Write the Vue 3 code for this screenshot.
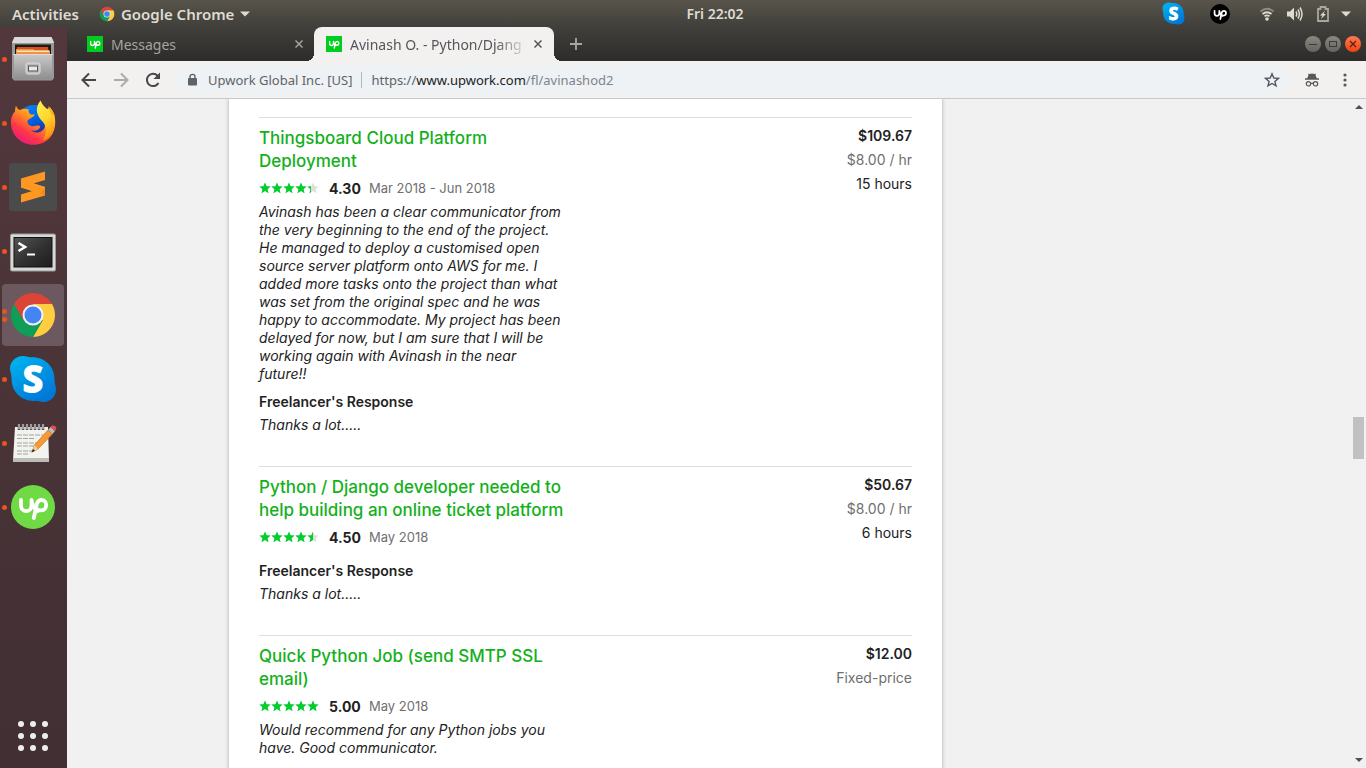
<script setup>
const dockItems = [
  { id: 'files', label: 'Files', dots: 1 },
  { id: 'firefox', label: 'Firefox', dots: 1 },
  { id: 'sublime', label: 'Sublime Text', dots: 1 },
  { id: 'terminal', label: 'Terminal', dots: 1 },
  { id: 'chrome', label: 'Google Chrome', dots: 2, active: true },
  { id: 'skype', label: 'Skype', dots: 1 },
  { id: 'notes', label: 'Text Editor', dots: 1 },
  { id: 'upwork', label: 'Upwork', dots: 1 },
]

const jobs = [
  {
    title: 'Thingsboard Cloud Platform\nDeployment',
    score: '4.30',
    fill: 86,
    dates: 'Mar 2018 - Jun 2018',
    feedback:
      'Avinash has been a clear communicator from\nthe very beginning to the end of the project.\nHe managed to deploy a customised open\nsource server platform onto AWS for me. I\nadded more tasks onto the project than what\nwas set from the original spec and he was\nhappy to accommodate. My project has been\ndelayed for now, but I am sure that I will be\nworking again with Avinash in the near\nfuture!!',
    response: 'Thanks a lot.....',
    total: '$109.67',
    rate: '$8.00 / hr',
    hours: '15 hours',
  },
  {
    title: 'Python / Django developer needed to\nhelp building an online ticket platform',
    score: '4.50',
    fill: 90,
    dates: 'May 2018',
    response: 'Thanks a lot.....',
    total: '$50.67',
    rate: '$8.00 / hr',
    hours: '6 hours',
  },
  {
    title: 'Quick Python Job (send SMTP SSL\nemail)',
    score: '5.00',
    fill: 100,
    dates: 'May 2018',
    feedback: 'Would recommend for any Python jobs you\nhave. Good communicator.',
    total: '$12.00',
    rate: 'Fixed-price',
  },
]

const starPath = 'M6 0.5L7.6 4.2L11.6 4.6L8.6 7.2L9.5 11.2L6 9.1L2.5 11.2L3.4 7.2L0.4 4.6L4.4 4.2Z'
</script>

<template>
  <div class="desktop">
    <svg width="0" height="0" class="defs" aria-hidden="true">
      <defs>
        <symbol id="chrome-mark" viewBox="0 0 48 48">
          <path d="M4.95 13A22 22 0 0 1 43.05 13L24 13L14.47 29.5Z" fill="#db4437" />
          <path d="M43.05 13A22 22 0 0 1 24 46L33.53 29.5L24 13Z" fill="#ffcd40" />
          <path d="M24 46A22 22 0 0 1 4.95 13L14.47 29.5L33.53 29.5Z" fill="#0f9d58" />
          <circle cx="24" cy="24" r="10.5" fill="#f1f1f1" />
          <circle cx="24" cy="24" r="8.5" fill="#4285f4" />
        </symbol>
        <symbol id="up-mark" viewBox="0 0 44 44">
          <g fill="none" stroke="#fff" stroke-width="3.8" stroke-linecap="round" stroke-linejoin="round">
            <path d="M10 15V20.5C10 28 20.5 28 20.5 20.5V15C21.5 20 24 24.5 27 26" />
            <path d="M22.8 33L25.4 20.5C26.2 16.5 28 15 30.4 15C33.4 15 35.2 17.4 35.2 20C35.2 23 33 25.4 30 25.4C28.5 25.4 27 25 25.5 23.8" />
          </g>
        </symbol>
        <symbol id="skype-mark" viewBox="0 0 48 48">
          <linearGradient id="skype-fill" x1="0" y1="0" x2="0.6" y2="1">
            <stop offset="0" stop-color="#00b7f0" />
            <stop offset="1" stop-color="#0078d7" />
          </linearGradient>
          <path
            d="M14 1C18 1 19 2.5 22 2.2C36 1.5 46 12 45.5 25C45.5 29 47 31 47 34.5C47 42 41 47 34.5 47C31 47 29 45.6 26 45.9C12 46.5 2 36 2.6 23C2.6 19 1 17 1 13.5C1 7 6.500 1 14 1Z"
            fill="url(#skype-fill)"
          />
          <text x="24" y="37" text-anchor="middle" font-size="36" font-weight="700" font-family="Open Sans, sans-serif" fill="#fff" stroke="#fff" stroke-width="2">S</text>
        </symbol>
        <linearGradient id="cab" x1="0" y1="0" x2="0" y2="1">
          <stop offset="0" stop-color="#c9c9c9" />
          <stop offset="1" stop-color="#8e8e8e" />
        </linearGradient>
        <linearGradient id="ff-body" x1="0.9" y1="0" x2="0.2" y2="1">
          <stop offset="0" stop-color="#fff04a" />
          <stop offset="0.4" stop-color="#ff9a1e" />
          <stop offset="0.72" stop-color="#ff3647" />
          <stop offset="1" stop-color="#e31587" />
        </linearGradient>
        <linearGradient id="ff-tail" x1="0" y1="0" x2="0.4" y2="1">
          <stop offset="0" stop-color="#fff44f" />
          <stop offset="0.6" stop-color="#ffd52c" />
          <stop offset="1" stop-color="#ff980e" />
        </linearGradient>
        <linearGradient id="ff-globe" x1="0.2" y1="0" x2="0.6" y2="1">
          <stop offset="0" stop-color="#0a84ff" />
          <stop offset="0.5" stop-color="#0060df" />
          <stop offset="1" stop-color="#3a1b8c" />
        </linearGradient>
        <linearGradient id="term" x1="0" y1="0" x2="1" y2="1">
          <stop offset="0" stop-color="#555" />
          <stop offset="0.5" stop-color="#333" />
          <stop offset="1" stop-color="#1c1c1c" />
        </linearGradient>
      </defs>
    </svg>

    <header class="topbar">
      <div class="topbar-left">
        <button class="top-btn" type="button">Activities</button>
        <button class="top-btn app-btn" type="button">
          <svg width="16" height="16"><use href="#chrome-mark" /></svg>
          <span>Google Chrome</span>
          <svg width="10" height="6" viewBox="0 0 10 6"><path d="M0 0.500H10L5 5.500Z" fill="#dfdbd2" /></svg>
        </button>
      </div>
      <time class="clock">Fri 22:02</time>
      <div class="tray">
        <svg width="23" height="23"><use href="#skype-mark" /></svg>
        <svg class="tray-up" width="20" height="20" viewBox="0 0 44 44"><circle cx="22" cy="22" r="22" fill="#000" /><use href="#up-mark" /></svg>
        <svg class="tray-wifi" width="14" height="14" viewBox="0 0 14 14" fill="none" stroke-width="1.8">
          <path d="M0.500 4.500Q7 -1 13.500 4.500" stroke="#8d8a83" />
          <path d="M2.500 7Q7 3.500 11.500 7" stroke="#dfdbd2" />
          <path d="M4.500 9.300Q7 7.600 9.500 9.300" stroke="#dfdbd2" />
          <circle cx="7" cy="12" r="1.800" fill="#dfdbd2" />
        </svg>
        <svg class="tray-sound" width="16" height="14" viewBox="0 0 16 14">
          <path d="M0 4.500H3L7 0.500V13.500L3 9.500H0Z" fill="#dfdbd2" />
          <path d="M9 4.500Q10.500 7 9 9.500M11 2.500Q13.800 7 11 11.500M13 0.500Q17 7 13 13.500" fill="none" stroke="#dfdbd2" stroke-width="1.500" />
        </svg>
        <svg class="tray-battery" width="12" height="16" viewBox="0 0 12 16">
          <path d="M1 3H3.500V1H8.500V3H11V15H1Z" fill="none" stroke="#aaa79f" stroke-width="1.800" />
          <path d="M8 4.500L3 9.500H5.500L4 13L9 8H6.500Z" fill="#dfdbd2" />
        </svg>
        <svg class="tray-arrow" width="10" height="6" viewBox="0 0 10 6"><path d="M0 0.500H10L5 5.500Z" fill="#dfdbd2" /></svg>
      </div>
    </header>

    <nav class="dock" aria-label="Dock">
      <button v-for="item in dockItems" :key="item.id" type="button" class="dock-item" :class="{ active: item.active }" :aria-label="item.label">
        <span class="dots"><i v-for="n in item.dots" :key="n"></i></span>
        <svg v-if="item.id === 'files'" width="48" height="48" viewBox="0 0 48 48">
          <path d="M5.500 2H42.500L45 7V43L43 45.500H5L3 43V7Z" fill="#999" />
          <path d="M5.500 2H42.500L45 8H3Z" fill="#dadada" />
          <rect x="6" y="9.500" width="36" height="12" fill="#1e1a18" />
          <path d="M8 12H39L40 20H7Z" fill="#d4521c" />
          <path d="M7 14H24L26 15.500H41V22H7Z" fill="#f0923c" />
          <rect x="8" y="15.500" width="32" height="1.500" fill="#fbe3c4" />
          <path d="M5 19.500H43V44.500H5Z" fill="url(#cab)" />
          <path d="M4 19.500H44" stroke="#d9d9d9" />
          <rect x="17" y="28" width="14" height="11" rx="2" fill="#bdbdbd" stroke="#dedede" />
          <rect x="19.500" y="31" width="9" height="5" fill="#e8e8e8" stroke="#555" />
        </svg>
        <svg v-else-if="item.id === 'firefox'" width="48" height="48" viewBox="0 0 48 48">
          <circle cx="25" cy="23" r="17" fill="url(#ff-globe)" />
          <path
            d="M7 6.500C8 9 9 10.500 11 11C14 9 17 9.500 20 10.500C19 12.500 20 14.500 22 15.500H26C24.500 18.500 21 19 18.500 21.500C18 25 21 28 25 27C28 26 32 26 31 28.500C29 32 25 32.500 22 31C27 36 35 33 36 27C37 22 35 17 32 13L41 8.500C48 16 48 30 41 38.500C32 49 14 48 6 36.500C0 28 1 17 6 12.500C6 10.500 6.400 8 7 6.500Z"
            fill="url(#ff-body)"
          />
          <path d="M31.500 1.500C33 5 35 7.500 38 10C44 15 46 22 45 29C43 36 39 40 34 41C38 34 38 28 34 23C28 17 25 10 31.500 1.500Z" fill="url(#ff-tail)" />
          <path d="M39 7C42 9 45 13 46 18L42 15Z" fill="#ffb01e" />
        </svg>
        <svg v-else-if="item.id === 'sublime'" width="48" height="48" viewBox="0 0 48 48">
          <rect width="48" height="48" rx="3" fill="#4b4b4b" />
          <path d="M12 15.500L36 8.500V17L24 20.600L36 24V32.500L12 39.500V31.500L24 27.700L12 24.500Z" fill="#ff9822" />
          <path d="M12 16V24.500L36 32.500V24Z" fill="#ff9822" />
          <path d="M24 27.700L31 30.500L36 25V32.500Z" fill="#ef8a18" />
        </svg>
        <svg v-else-if="item.id === 'terminal'" width="48" height="48" viewBox="0 0 48 48">
          <rect x="1.500" y="7" width="45" height="37" rx="1.500" fill="#d7d7d5" stroke="#9c9c9a" />
          <rect x="5" y="10.500" width="38" height="29.500" fill="url(#term)" stroke="#111" />
          <path d="M9.500 16L16 20L9.500 24" fill="none" stroke="#fff" stroke-width="2.600" />
          <path d="M18 27.500H26" stroke="#fff" stroke-width="2" />
        </svg>
        <svg v-else-if="item.id === 'chrome'" width="48" height="48"><use href="#chrome-mark" /></svg>
        <svg v-else-if="item.id === 'skype'" width="48" height="48"><use href="#skype-mark" /></svg>
        <svg v-else-if="item.id === 'notes'" width="48" height="48" viewBox="0 0 48 48">
          <path d="M6 8H39L40 41.500H4Z" fill="#f2f2ef" />
          <path d="M4 39H40V43H4Z" fill="#bcbcb8" />
          <path d="M8 16H34M8 19.500H26M8 24H32M8 27H28M8 32H23M8 35H19" stroke="#a3a3a3" stroke-dasharray="5 1" />
          <path d="M10 5V11M14 5V11M18 5V11M22 5V11M26 5V11M30 5V11M34 5V11" stroke="#555" stroke-width="2.600" />
          <path d="M10 5V10M14 5V10M18 5V10M22 5V10M26 5V10M30 5V10M34 5V10" stroke="#e6e6e6" stroke-width="1" />
          <path d="M23 33L25.500 26L39 11L43.500 15L29 30Z" fill="#f79a32" stroke="#b5671b" stroke-width="0.600" />
          <path d="M23 33L25.500 26L29 30Z" fill="#edcda0" />
          <path d="M22.500 33.500L24 30L26 31.800Z" fill="#222" />
          <path d="M39 11L41.500 8L46 12L43.500 15Z" fill="#b9bdc0" />
          <path d="M41.500 8C44 4.500 50 8 46 12Z" fill="#e2504f" />
        </svg>
        <svg v-else width="44" height="44" viewBox="0 0 44 44"><circle cx="22" cy="22" r="22" fill="#6fda44" /><use href="#up-mark" /></svg>
      </button>
      <button type="button" class="apps" aria-label="Show Applications">
        <i v-for="n in 9" :key="n"></i>
      </button>
    </nav>

    <main class="browser">
      <div class="tabstrip">
        <div class="tab">
          <svg class="favicon" width="16" height="16" viewBox="0 0 44 44"><rect width="44" height="44" fill="#00ce1e" /><use href="#up-mark" /></svg>
          <span class="tab-title">Messages</span>
          <button type="button" class="close" aria-label="Close Messages">
            <svg width="8" height="8" viewBox="0 0 8 8"><path d="M0.500 0.500L7.500 7.500M7.500 0.500L0.500 7.500" stroke="currentColor" stroke-width="1.500" /></svg>
          </button>
        </div>
        <div class="tab current">
          <svg class="favicon" width="16" height="16" viewBox="0 0 44 44"><rect width="44" height="44" fill="#00ce1e" /><use href="#up-mark" /></svg>
          <span class="tab-title fade">Avinash O. - Python/Djang</span>
          <button type="button" class="close" aria-label="Close Avinash O.">
            <svg width="8" height="8" viewBox="0 0 8 8"><path d="M0.500 0.500L7.500 7.500M7.500 0.500L0.500 7.500" stroke="currentColor" stroke-width="1.500" /></svg>
          </button>
        </div>
        <button type="button" class="new-tab" aria-label="New tab">
          <svg width="12" height="12" viewBox="0 0 12 12"><path d="M6 0V12M0 6H12" stroke="#a9a8a6" stroke-width="1.800" /></svg>
        </button>
        <div class="window-controls">
          <button type="button" aria-label="Minimize"><svg width="16" height="16" viewBox="0 0 16 16"><path d="M4 8.500H12" stroke="#3c3b37" /></svg></button>
          <button type="button" aria-label="Maximize"><svg width="16" height="16" viewBox="0 0 16 16"><rect x="4.500" y="5.500" width="7" height="5" fill="none" stroke="#3c3b37" /></svg></button>
          <button type="button" class="win-close" aria-label="Close window"><svg width="16" height="16" viewBox="0 0 16 16"><path d="M5 5L11 11M11 5L5 11" stroke="#5c2010" stroke-width="1.300" /></svg></button>
        </div>
      </div>

      <div class="toolbar">
        <button type="button" class="nav-btn" aria-label="Back">
          <svg width="16" height="16" viewBox="0 0 16 16" fill="none" stroke="#46474a" stroke-width="2"><path d="M15 8H2M8 1.500L1.500 8L8 14.500" /></svg>
        </button>
        <button type="button" class="nav-btn" aria-label="Forward">
          <svg width="16" height="16" viewBox="0 0 16 16" fill="none" stroke="#ababab" stroke-width="2"><path d="M1 8H14M8 1.500L14.500 8L8 14.500" /></svg>
        </button>
        <button type="button" class="nav-btn" aria-label="Reload">
          <svg width="16" height="16" viewBox="0 0 16 16"><path d="M13.500 11A6.200 6.200 0 1 1 12.600 3.600L14 5" fill="none" stroke="#46474a" stroke-width="2" /><path d="M15 0.500V7H8.500Z" fill="#46474a" /></svg>
        </button>
        <div class="omnibox">
          <svg width="10" height="14" viewBox="0 0 10 14"><rect x="1" y="5" width="9" height="7.500" rx="1" fill="#5f6368" /><path d="M3 6V3.600Q3 1.400 5.500 1.400T8 3.600V6" fill="none" stroke="#5f6368" stroke-width="1.400" /></svg>
          <span class="owner">Upwork Global Inc. [US]</span>
          <a class="url" href="#">https://<b>www.upwork.com</b><span>/fl/avinashod2</span></a>
          <button type="button" class="star-btn" aria-label="Bookmark">
            <svg width="16" height="16" viewBox="0 0 16 16"><path d="M8 1.800L9.800 6L14.400 6.400L10.900 9.400L12 13.900L8 11.500L4 13.900L5.100 9.400L1.600 6.400L6.200 6Z" fill="none" stroke="#54575c" stroke-width="1.400" /></svg>
          </button>
        </div>
        <svg class="incognito" width="14" height="14" viewBox="0 0 14 14" role="img" aria-label="Incognito">
          <path d="M3.500 0.500L5 1L7 0.600L9 1L10.500 0.500L11 4H3Z" fill="#54575c" />
          <path d="M0 6H14M2.500 4.700H11.500" stroke="#54575c" stroke-width="1.300" />
          <g fill="none" stroke="#54575c" stroke-width="1.200"><circle cx="3.500" cy="10.800" r="2.200" /><circle cx="10.500" cy="10.800" r="2.200" /><path d="M5.700 10.500Q7 9.600 8.300 10.500" /></g>
        </svg>
        <button type="button" class="menu-btn" aria-label="Menu">
          <svg width="4" height="14" viewBox="0 0 4 14" fill="#54575c"><circle cx="2" cy="2" r="1.600" /><circle cx="2" cy="7" r="1.600" /><circle cx="2" cy="12" r="1.600" /></svg>
        </button>
      </div>

      <div class="viewport">
        <div class="page">
          <section class="card">
            <article v-for="job in jobs" :key="job.title" class="job">
              <div class="job-main">
                <h2><a href="#">{{ job.title }}</a></h2>
                <div class="rating">
                  <span class="stars" role="img" :aria-label="job.score + ' out of 5'">
                    <svg width="60" height="12" viewBox="0 0 60 12"><path v-for="n in 5" :key="n" :d="starPath" :transform="`translate(${(n - 1) * 12} 0)`" fill="#dedede" /></svg>
                    <span class="stars-fill" :style="{ width: job.fill + '%' }">
                      <svg width="60" height="12" viewBox="0 0 60 12"><path v-for="n in 5" :key="n" :d="starPath" :transform="`translate(${(n - 1) * 12} 0)`" fill="#00ce2c" /></svg>
                    </span>
                  </span>
                  <strong>{{ job.score }}</strong>
                  <span class="dates">{{ job.dates }}</span>
                </div>
                <div class="comments">
                  <p v-if="job.feedback" class="feedback">{{ job.feedback }}</p>
                  <div v-if="job.response" class="response">
                    <h3>Freelancer's Response</h3>
                    <p>{{ job.response }}</p>
                  </div>
                </div>
              </div>
              <div class="job-side">
                <strong>{{ job.total }}</strong>
                <span class="muted">{{ job.rate }}</span>
                <span v-if="job.hours">{{ job.hours }}</span>
              </div>
            </article>
          </section>
        </div>
        <div class="scrollbar" aria-hidden="true">
          <svg width="8" height="4" viewBox="0 0 8 4"><path d="M0 4L4 0L8 4Z" fill="#505050" /></svg>
          <span class="track-before"></span>
          <span class="thumb"></span>
          <span class="track-after"></span>
          <svg width="8" height="4" viewBox="0 0 8 4"><path d="M0 0L4 4L8 0Z" fill="#505050" /></svg>
        </div>
      </div>
    </main>
  </div>
</template>

<style>
body {
  margin: 0;
}
</style>

<style scoped>
.desktop {
  display: grid;
  grid-template: 27px minmax(0, 1fr) / 67px minmax(0, 1fr);
  height: 100vh;
  overflow: hidden;
  font-family: "Noto Sans", "Open Sans", sans-serif;
  font-size: 14px;
}
.defs {
  position: absolute;
}
button {
  margin: 0;
  padding: 0;
  border: 0;
  background: none;
  color: inherit;
  font: inherit;
  display: flex;
  align-items: center;
  justify-content: center;
}
svg {
  flex: none;
  display: block;
}
a {
  text-decoration: none;
  color: inherit;
}

.topbar {
  grid-column: 1 / -1;
  display: grid;
  grid-template-columns: 1fr auto 1fr;
  align-items: center;
  padding: 0 15px 0 12px;
  background: linear-gradient(#58544b, #403f3a);
  color: #dfdbd2;
  font-size: 14px;
  font-weight: 600;
  line-height: 18px;
}
.topbar-left,
.tray {
  display: flex;
  align-items: center;
}
.topbar-left {
  gap: 20px;
  font-size: 15px;
}
.app-btn {
  gap: 6px;
}
.clock {
  margin-left: 67px;
}
.tray {
  justify-content: flex-end;
}
.tray-up {
  margin-left: 25px;
}
.tray-wifi {
  margin-left: 30px;
}
.tray-sound {
  margin-left: 13px;
}
.tray-battery {
  margin-left: 14px;
}
.tray-arrow {
  margin-left: 12px;
}

.dock {
  display: flex;
  flex-direction: column;
  gap: 2px;
  padding: 1px 3px 9px 2px;
  background: linear-gradient(#52383c, #412f33);
}
.dock-item {
  position: relative;
  height: 62px;
  border-radius: 4px;
}
.dock-item.active {
  background: #6c585f;
}
.dots {
  position: absolute;
  left: 0;
  top: 0;
  height: 100%;
  display: flex;
  flex-direction: column;
  justify-content: center;
  gap: 3px;
}
.dots i {
  width: 5px;
  height: 5px;
  border-radius: 50%;
  background: #e95420;
}
.apps {
  display: grid;
  grid-template-columns: repeat(3, 6px);
  gap: 6px;
  margin-top: auto;
  padding: 8px 0;
}
.apps i {
  width: 6px;
  height: 6px;
  border-radius: 50%;
  background: #eee;
}

.browser {
  display: flex;
  flex-direction: column;
  min-width: 0;
}
.tabstrip {
  display: flex;
  height: 34px;
  flex: none;
  background: linear-gradient(#403f3b, #2d2c2b);
}
.tab {
  box-sizing: border-box;
  display: flex;
  align-items: center;
  width: 247px;
  padding: 0 11px 0 20px;
  color: #a5a4a1;
}
.tab.current {
  position: relative;
  width: 240px;
  padding: 0 12px;
  border-radius: 8px 8px 0 0;
  background: #f2f1f0;
  color: #55565a;
}
.tab.current::before,
.tab.current::after {
  content: "";
  position: absolute;
  bottom: 0;
  width: 8px;
  height: 8px;
}
.tab.current::before {
  right: 100%;
  background: radial-gradient(circle at 0 0, transparent 8px, #f2f1f0 8px);
}
.tab.current::after {
  left: 100%;
  background: radial-gradient(circle at 100% 0, transparent 8px, #f2f1f0 8px);
}
.tab-title {
  flex: 1;
  min-width: 0;
  margin: 0 2px 0 8px;
  overflow: hidden;
  white-space: nowrap;
}
.fade {
  mask-image: linear-gradient(to right, #000 80%, transparent 98%);
}
.close {
  width: 8px;
  height: 16px;
}
.new-tab {
  width: 44px;
}
.window-controls {
  display: flex;
  align-items: center;
  gap: 4px;
  margin-left: auto;
  padding-right: 5px;
}
.window-controls button {
  border-radius: 50%;
  background: linear-gradient(#8a8880, #66645d);
}
.window-controls .win-close {
  background: linear-gradient(#ff7a52, #ee4210);
}

.toolbar {
  display: flex;
  align-items: center;
  height: 37px;
  flex: none;
  padding: 0 19px 0 14px;
  border-bottom: 1px solid #c9c8c8;
  background: #f2f1f0;
}
.nav-btn {
  width: 16px;
  height: 28px;
  margin-right: 16px;
}
.omnibox {
  flex: 1;
  min-width: 0;
  display: flex;
  align-items: center;
  height: 28px;
  margin: 0 16px 0 -2px;
  padding: 0 9px 0 12px;
  border-radius: 14px;
  background: #eef2f4;
  color: #606367;
  font-size: 13px;
}
.owner {
  margin-left: 11px;
  padding-right: 9px;
  border-right: 1px solid #b4b7ba;
  line-height: 16px;
}
.url {
  margin-left: 9px;
}
.url b {
  color: #202124;
  font-weight: 400;
}
.url span {
  color: #80848a;
}
.star-btn {
  margin-left: auto;
}
.menu-btn {
  margin-left: 24px;
}

.viewport {
  flex: 1;
  min-height: 0;
  display: flex;
  background: #f1f1f1;
}
.page {
  flex: 1;
  min-width: 0;
  overflow: hidden;
}
.card {
  box-sizing: border-box;
  max-width: 713px;
  margin-left: 162px;
  padding: 18px 30px 30px;
  background: #fff;
  box-shadow: 0 0 4px rgba(0, 0, 0, 0.3);
  color: #222;
  font-family: Inter, "Open Sans", sans-serif;
}
.job {
  display: flex;
  justify-content: space-between;
  padding-bottom: 29px;
  border-top: 1px solid #dedede;
}
.job-main {
  padding-top: 9px;
  white-space: pre-line;
}
h2,
h3,
p {
  margin: 0;
}
h2 {
  color: #14b01c;
  font-size: 17px;
  font-weight: 500;
  line-height: 23px;
}
.rating {
  display: flex;
  align-items: center;
  height: 24px;
  margin-top: 3px;
  font-size: 13px;
}
.stars {
  position: relative;
}
.stars-fill {
  position: absolute;
  left: 0;
  top: 0;
  overflow: hidden;
}
.rating strong {
  width: 40px;
  margin-left: 10px;
  font-size: 14px;
}
.dates,
.muted {
  color: #6f6f6f;
}
.comments {
  display: flow-root;
  margin-top: 3px;
}
.feedback {
  font-size: 14px;
  font-style: italic;
  line-height: 18px;
}
.response {
  margin-top: 8px;
}
.response h3 {
  font-size: 14px;
  font-weight: 600;
  line-height: 22px;
}
.response p {
  font-size: 14px;
  font-style: italic;
  line-height: 24px;
}
.job-side {
  display: flex;
  flex-direction: column;
  align-items: flex-end;
  padding-top: 6px;
  font-size: 14px;
  line-height: 24px;
}
.job-side strong {
  font-weight: 600;
}

.scrollbar {
  box-sizing: border-box;
  display: flex;
  flex-direction: column;
  align-items: center;
  width: 15px;
  padding: 6px 0;
}
.track-before {
  flex: 308;
}
.track-after {
  flex: 299;
}
.thumb {
  width: 11px;
  flex: 42;
  background: #c1c1c1;
}
</style>
